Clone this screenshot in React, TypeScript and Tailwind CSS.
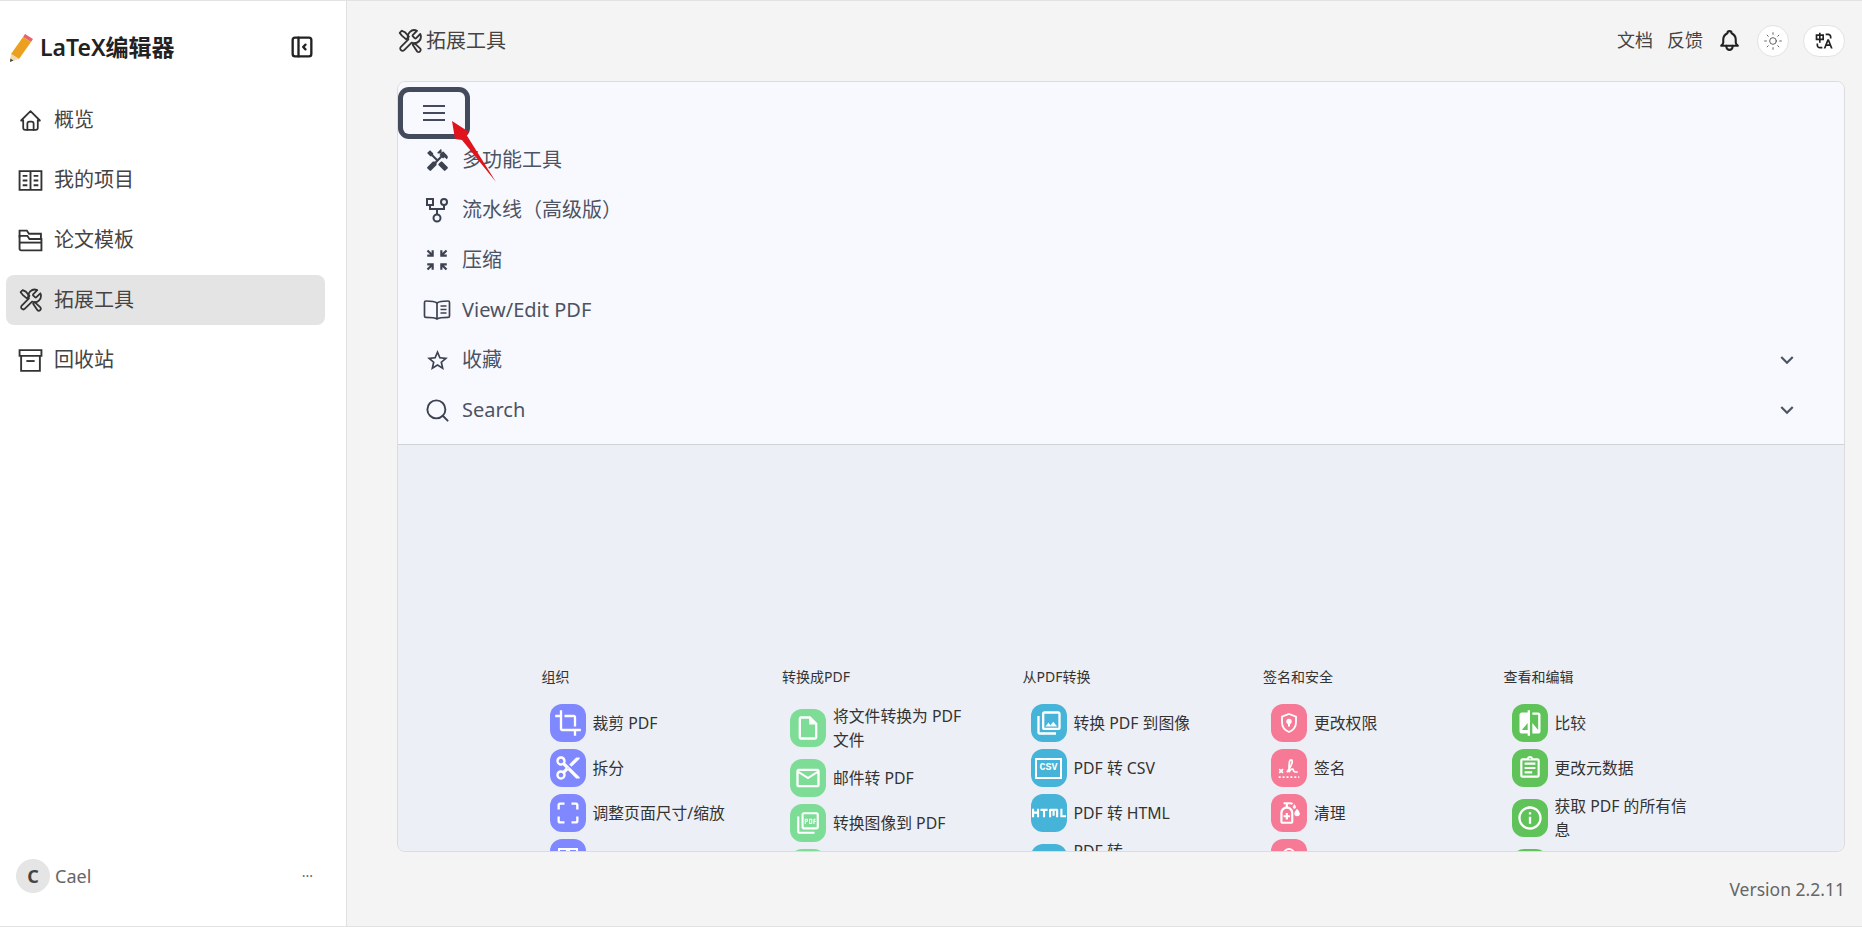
import type { ReactNode } from 'react'
import { TbHome, TbLayoutSidebarLeftCollapse, TbBell } from 'react-icons/tb'
import {
  MdHandyman,
  MdOutlineZoomInMap,
  MdStarBorder,
  MdExpandMore,
  MdCrop,
  MdContentCut,
  MdCropFree,
  MdOutlineInsertDriveFile,
  MdOutlineEmail,
  MdOutlinePictureAsPdf,
  MdOutlinePhotoLibrary,
  MdHtml,
  MdOutlineSanitizer,
  MdCompare,
  MdOutlineAssignment,
  MdInfoOutline,
} from 'react-icons/md'
import { RiTranslate } from 'react-icons/ri'
import { LuSun, LuSearch } from 'react-icons/lu'

const font = "font-['Noto_Sans','Noto_Sans_CJK_SC',sans-serif]"

function ToolsIcon() {
  return (
    <svg width="26" height="26" viewBox="0 0 24 24" fill="none" stroke="currentColor" strokeWidth="1.700" strokeLinejoin="round" strokeLinecap="round">
      <path d="M14.700 6.300a1 1 0 0 0 0 1.400l1.600 1.600a1 1 0 0 0 1.400 0l3.770-3.770a6 6 0 0 1-7.940 7.940l-6.910 6.910a2.120 2.120 0 0 1-3-3l6.910-6.910a6 6 0 0 1 7.940-7.940l-3.760 3.760z" />
      <path d="M2.500 4.500l2-2 3 1.500 3.500 4-2.500 2.500-4-3.500z" />
      <path d="M14.500 15.500l1.500-1.500 5.500 5a2 2 0 0 1-2.800 2.800z" />
    </svg>
  )
}

function BookIcon() {
  return (
    <svg width="25" height="25" viewBox="0 0 24 24" fill="none" stroke="currentColor" strokeWidth="1.800">
      <path d="M12 21H1.500V3H12m0 18h10.500V3H12m0 18V3" />
      <path d="M4.500 7.500h4.500M4.500 12h4.500M4.500 16.500h4.500M15 7.500h4.500M15 12h4.500M15 16.500h4.500" />
    </svg>
  )
}

function FoldersIcon() {
  return (
    <svg width="25" height="25" viewBox="0 0 24 24" fill="none" stroke="currentColor" strokeWidth="1.800">
      <path d="M1.500 9V2.500h7l2 3h11.500v5" />
      <path d="M1.500 7.500h7.500l2 3h11.500v11H3a1.500 1.500 0 0 1-1.500-1.500z" />
      <path d="M1.500 14h21" />
    </svg>
  )
}

function ArchiveIcon() {
  return (
    <svg width="25" height="25" viewBox="0 0 24 24" fill="none" stroke="currentColor" strokeWidth="1.800">
      <path d="M1.500 2h21v5.500h-21z" />
      <path d="M3 7.500V22h18V7.500" />
      <path d="M8 12.500h8" />
    </svg>
  )
}

function ForkIcon() {
  return (
    <svg width="24" height="26" viewBox="0 0 24 26" fill="none" stroke="currentColor" strokeWidth="2">
      <rect x="2" y="2" width="6" height="6" />
      <circle cx="19" cy="5" r="3" />
      <circle cx="12" cy="21" r="3.500" />
      <path d="M5 8v4h14V8M12 12v5.500" />
    </svg>
  )
}

function OpenBookIcon() {
  return (
    <svg width="28" height="24" viewBox="0 0 28 24" fill="none" stroke="currentColor" strokeWidth="1.700">
      <path d="M14 5c-2-1.500-5-2-11-2-1 0-1.500.6-1.500 1.500V18c0 .8.500 1.400 1.500 1.400 5 0 9 .2 11 1.600 2-1.400 6-1.600 11-1.600 1 0 1.500-.6 1.500-1.400V4.500c0-.9-.5-1.500-1.500-1.500-6 0-9 .5-11 2z" />
      <path d="M14 5v16M17.500 8h6M17.500 11.500h6M17.500 15h6" />
    </svg>
  )
}

function MenuLines() {
  return (
    <svg width="24" height="18" viewBox="0 0 24 18" fill="none" stroke="currentColor" strokeWidth="2">
      <path d="M1 2h22M1 9h22M1 16h22" />
    </svg>
  )
}

function Pencil() {
  return (
    <svg width="26" height="30" viewBox="0 0 26 30">
      <path d="M17 2l8 5-2 3-8-5z" fill="#e8636b" />
      <path d="M15 5l8 5L11 27l-8-5z" fill="#eca01f" />
      <path d="M3 22l8 5-9 3z" fill="#f3d9a8" />
      <path d="M2.400 26.500l3 2-3.400 1.500z" fill="#444" />
    </svg>
  )
}

function ShieldIcon() {
  return (
    <svg width="24" height="24" viewBox="0 0 24 24" fill="none" stroke="white" strokeWidth="1.800">
      <path d="M12 3l7 2.600v5.600c0 4.400-3 8-7 9.800-4-1.800-7-5.400-7-9.800V5.600z" />
      <circle cx="12" cy="10.500" r="1.800" fill="white" />
      <path d="M12 11v4.500" strokeWidth="2" />
    </svg>
  )
}

function SignIcon() {
  return (
    <svg width="26" height="26" viewBox="0 0 24 24" fill="none" stroke="white" strokeWidth="1.600">
      <path d="M3 13l3.500 3.500M6.500 13L3 16.500" />
      <path d="M10 16c2-3 5-7 5-10 0-2-2-2-2.500 0-.6 3-.6 6-.5 10 1-3 3.500-4 4-2 .3 1.500 1.500 2 4 1.500" />
      <path d="M2.500 20.500h19" strokeDasharray="1.800 1.800" />
    </svg>
  )
}

function CsvIcon() {
  return (
    <span className="flex h-[21px] w-[27px] items-center justify-center border-2 border-white font-['Liberation_Mono',monospace] text-[10px] font-bold leading-none text-white">
      CSV
    </span>
  )
}

function GridIcon() {
  return (
    <svg width="24" height="24" viewBox="0 0 24 24" fill="none" stroke="white" strokeWidth="2">
      <rect x="3" y="3" width="8" height="8" />
      <rect x="13" y="3" width="8" height="8" />
      <rect x="3" y="13" width="8" height="8" />
      <rect x="13" y="13" width="8" height="8" />
    </svg>
  )
}

function SearchPinIcon() {
  return (
    <svg width="24" height="24" viewBox="0 0 24 24" fill="none" stroke="white" strokeWidth="2">
      <circle cx="12" cy="8" r="5" />
    </svg>
  )
}

const navItems: { label: string; icon: ReactNode; active?: boolean }[] = [
  { label: '概览', icon: <TbHome size={27} strokeWidth={1.7} /> },
  { label: '我的项目', icon: <BookIcon /> },
  { label: '论文模板', icon: <FoldersIcon /> },
  { label: '拓展工具', icon: <ToolsIcon />, active: true },
  { label: '回收站', icon: <ArchiveIcon /> },
]

const menuItems: { label: string; icon: ReactNode; more?: boolean }[] = [
  { label: '多功能工具', icon: <MdHandyman size={25} /> },
  { label: '流水线（高级版）', icon: <ForkIcon /> },
  { label: '压缩', icon: <MdOutlineZoomInMap size={26} /> },
  { label: 'View/Edit PDF', icon: <OpenBookIcon /> },
  { label: '收藏', icon: <MdStarBorder size={25} />, more: true },
  { label: 'Search', icon: <LuSearch size={27} strokeWidth={1.7} />, more: true },
]

type Tool = { label?: string; icon: ReactNode; tall?: boolean }

const columns: { title: string; color: string; tools: Tool[] }[] = [
  {
    title: '组织',
    color: 'bg-[#8088ff]',
    tools: [
      { label: '裁剪 PDF', icon: <MdCrop size={28} /> },
      { label: '拆分', icon: <MdContentCut size={28} /> },
      { label: '调整页面尺寸/缩放', icon: <MdCropFree size={28} /> },
      { icon: <GridIcon /> },
    ],
  },
  {
    title: '转换成PDF',
    color: 'bg-[#7ddc96]',
    tools: [
      { label: '将文件转换为 PDF 文件', icon: <MdOutlineInsertDriveFile size={28} /> },
      { label: '邮件转 PDF', icon: <MdOutlineEmail size={28} /> },
      { label: '转换图像到 PDF', icon: <MdOutlinePictureAsPdf size={26} /> },
      { icon: <GridIcon /> },
    ],
  },
  {
    title: '从PDF转换',
    color: 'bg-[#45b4d8]',
    tools: [
      { label: '转换 PDF 到图像', icon: <MdOutlinePhotoLibrary size={28} /> },
      { label: 'PDF 转 CSV', icon: <CsvIcon /> },
      { label: 'PDF 转 HTML', icon: <MdHtml size={34} /> },
      { label: 'PDF 转', icon: <GridIcon />, tall: true },
    ],
  },
  {
    title: '签名和安全',
    color: 'bg-[#f67a96]',
    tools: [
      { label: '更改权限', icon: <ShieldIcon /> },
      { label: '签名', icon: <SignIcon /> },
      { label: '清理', icon: <MdOutlineSanitizer size={26} /> },
      { icon: <SearchPinIcon /> },
    ],
  },
  {
    title: '查看和编辑',
    color: 'bg-[#5fc35a]',
    tools: [
      { label: '比较', icon: <MdCompare size={28} /> },
      { label: '更改元数据', icon: <MdOutlineAssignment size={26} /> },
      { label: '获取 PDF 的所有信息', icon: <MdInfoOutline size={28} /> },
      { icon: <GridIcon /> },
    ],
  },
]

function ToolRow({ tool, color }: { tool: Tool; color: string }) {
  return (
    <div className={`ml-2 flex items-center gap-[7px] ${tool.tall ? 'h-12' : ''}`}>
      <span className={`flex h-[38px] w-9 shrink-0 items-center justify-center rounded-[12px] text-white ${color}`}>
        {tool.icon}
      </span>
      {tool.label && (
        <span className={`w-[142px] text-[15.8px] leading-6 text-[#333] ${tool.tall ? 'self-start' : ''}`}>
          {tool.label}
        </span>
      )}
    </div>
  )
}

export default function App() {
  return (
    <div className={`${font} relative flex h-[927px] w-[1862px] overflow-hidden border-y border-[#e2e2e2] bg-[#f4f4f4]`}>
      {/* sidebar */}
      <aside className="flex w-[347px] shrink-0 flex-col border-r border-[#e0e0e0] bg-white">
        <div className="flex h-[92px] items-center justify-between pl-2 pr-[30px]">
          <div className="flex items-center gap-[6px]">
            <Pencil />
            <span className="text-[23px] font-semibold text-[#222]">LaTeX编辑器</span>
          </div>
          <TbLayoutSidebarLeftCollapse size={28} className="text-[#222]" />
        </div>
        <nav className="mt-[2px] flex flex-col gap-[10px] pl-[6px] pr-[21px]">
          {navItems.map((item) => (
            <div
              key={item.label}
              className={`flex h-[50px] items-center gap-[11px] rounded-lg px-3 text-[20px] text-[#444] ${
                item.active ? 'bg-[#e4e4e4]' : ''
              }`}
            >
              <span className="flex w-[25px] justify-center text-[#333]">{item.icon}</span>
              {item.label}
            </div>
          ))}
        </nav>
        <div className="mt-auto mb-[33px] flex items-center pl-4 pr-[33px]">
          <span className="flex h-[34px] w-[34px] items-center justify-center rounded-full bg-[#e5e5e5] text-[18px] font-bold text-[#444]">
            C
          </span>
          <span className="ml-[5px] text-[18px] text-[#666]">Cael</span>
          <span className="ml-auto text-[14px] leading-none text-[#666]">···</span>
        </div>
      </aside>

      {/* main */}
      <main className="flex min-w-0 flex-1 flex-col pl-[50px] pr-[17px]">
        <header className="flex h-[80px] shrink-0 items-center justify-between pb-[1px] text-[18px] text-[#444]">
          <div className="flex items-center gap-[3px] text-[20px]">
            <span className="text-[#333]">
              <ToolsIcon />
            </span>
            拓展工具
          </div>
          <div className="flex items-center">
            <span>文档</span>
            <span className="ml-[14px]">反馈</span>
            <TbBell size={25} className="ml-[14px] text-[#222]" />
            <span className="ml-[15px] flex h-8 w-8 items-center justify-center rounded-full border border-[#e2e2e2] bg-white">
              <LuSun size={20} strokeWidth={1} className="text-[#444]" />
            </span>
            <span className="ml-[14px] flex h-8 w-[42px] items-center justify-center rounded-full border border-[#e2e2e2] bg-white">
              <RiTranslate size={20} className="text-[#222]" />
            </span>
          </div>
        </header>

        <section className="flex h-[771px] shrink-0 flex-col overflow-hidden rounded-lg border border-[#dcdcdc]">
          <div className="h-[363px] shrink-0 border-b border-[#cfd2d6] bg-[#f8f9ff] pt-[10px]">
            <div className="mb-[1px] ml-[5px] flex h-[42px] w-[62px] items-center justify-center rounded-[6px] text-[#434a5b] ring-[5px] ring-[#434a5b]">
              <MenuLines />
            </div>
            {menuItems.map((item) => (
              <div key={item.label} className="flex h-[50px] items-center pl-[22px] pr-[44px] text-[20px] text-[#4c5362]">
                <span className="flex w-[34px] justify-center text-[#3c4250]">{item.icon}</span>
                <span className="ml-[8px]">{item.label}</span>
                {item.more && <MdExpandMore size={26} className="ml-auto text-[#4c5362]" />}
              </div>
            ))}
          </div>
          <div className="flex min-h-0 flex-1 overflow-hidden bg-[#eceff5] pl-[143.500px] pt-[222px]">
            {columns.map((col) => (
              <div key={col.title} className="w-[240.500px] shrink-0">
                <div className="text-[14px] leading-5 text-[#333]">{col.title}</div>
                <div className="mt-[17px] flex flex-col gap-[7px]">
                  {col.tools.map((tool, i) => (
                    <ToolRow key={i} tool={tool} color={col.color} />
                  ))}
                </div>
              </div>
            ))}
          </div>
        </section>

        <div className="mt-[24px] text-right text-[17.5px] text-[#666]">Version 2.2.11</div>
      </main>

      {/* annotation arrow */}
      <svg className="absolute left-[445px] top-[115px]" width="60" height="72" viewBox="0 0 60 72">
        <path d="M7 5L24 16 21.500 19 51 66 17 24 10 23z" fill="#e0141c" />
      </svg>
    </div>
  )
}
